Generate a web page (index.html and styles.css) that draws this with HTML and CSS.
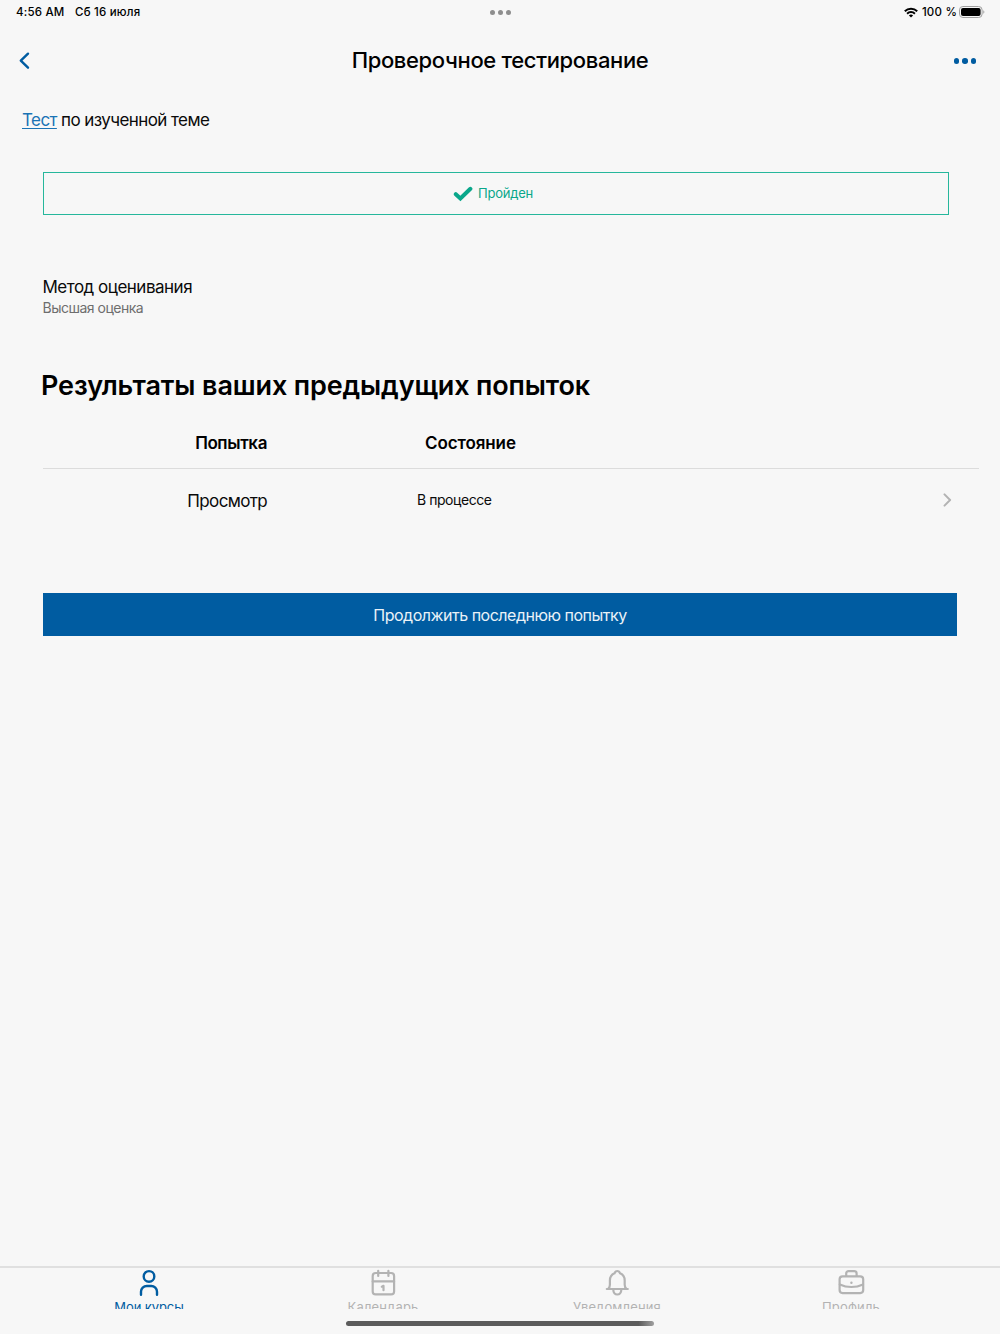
FILE: index.html
```html
<!DOCTYPE html>
<html lang="ru">

<head>
  <meta charset="UTF-8" />
  <meta name="viewport" content="width=device-width, initial-scale=1.0" />
  <title>Проверочное тестирование</title>
  <link rel="stylesheet" href="styles.css">
</head>

<body>
  <div class="status-bar">
    <div class="status-left">
      <span class="time">4:56 AM</span>
      <span class="date">Сб 16 июля</span>
    </div>
    <div class="multitask"><i></i><i></i><i></i></div>
    <div class="status-right">
      <svg width="14" height="11" viewBox="0 0 14 11" fill="none" stroke="#000" stroke-width="2">
        <path d="M0.8 4.2a8.9 8.9 0 0 1 12.4 0" />
        <path d="M3.1 6.7a5.6 5.6 0 0 1 7.8 0" />
        <path d="M7 10.6 4.9 8.5a3 3 0 0 1 4.2 0z" fill="#000" stroke="none" />
      </svg>
      <span class="percent">100 %</span>
      <svg width="26" height="12" viewBox="0 0 26 12">
        <rect x="0.5" y="0.5" width="22.6" height="11" rx="3.4" fill="none" stroke="#a0a0a0" />
        <rect x="2" y="2" width="19.6" height="8" rx="2" />
        <path d="M24.3 4.2v3.6q1.1-.5 1.1-1.8t-1.1-1.8z" fill="#a0a0a0" />
      </svg>
    </div>
  </div>

  <header class="header">
    <svg class="back" width="12" height="18" viewBox="0 0 12 18" fill="none" stroke="#005ca1" stroke-width="2.4" stroke-linecap="round" stroke-linejoin="round">
      <path d="M10 1.700 2.800 8.700l7.200 7" />
    </svg>
    <h1 class="title">Проверочное тестирование</h1>
    <div class="more"><i></i><i></i><i></i></div>
  </header>

  <main class="content">
    <p class="intro"><a href="#">Тест</a> по изученной теме</p>

    <div class="passed">
      <svg width="20" height="16" viewBox="0 0 20 16" fill="none" stroke="#0aa78b" stroke-width="4" stroke-linecap="round">
        <path d="M2.800 8.200 7.400 12.400 17.400 2.800" />
      </svg>
      <span class="passed-text">Пройден</span>
    </div>

    <section class="method">
      <div class="method-name">Метод оценивания</div>
      <div class="method-value">Высшая оценка</div>
    </section>

    <h2 class="results-title">Результаты ваших предыдущих попыток</h2>

    <div class="attempts">
      <div class="row row-head">
        <span class="col-attempt">Попытка</span>
        <span class="col-state">Состояние</span>
      </div>
      <div class="row">
        <span class="col-attempt">Просмотр</span>
        <span class="col-state">В процессе</span>
        <svg class="chevron" width="10" height="14" viewBox="0 0 10 14" fill="none" stroke="#b3b3b3" stroke-width="2" stroke-linecap="round" stroke-linejoin="round">
          <path d="M1.500 1.400 7.100 7 1.500 12.600" />
        </svg>
      </div>
    </div>

    <button class="continue"><span>Продолжить последнюю попытку</span></button>
  </main>

  <nav class="tabs">
    <a class="tab tab-courses active">
      <svg width="28" height="28" viewBox="0 0 28 28" fill="none" stroke="currentColor" stroke-width="2.4" stroke-linecap="round">
        <circle cx="14" cy="7.4" r="5.3" />
        <path d="M6 25.800v-3a5.800 5.800 0 0 1 5.800-5.800h4.400a5.800 5.800 0 0 1 5.800 5.800v3" />
      </svg>
      <span>Мои курсы</span>
    </a>
    <a class="tab tab-calendar">
      <svg width="28" height="28" viewBox="0 0 28 28" fill="none" stroke="currentColor" stroke-width="2.200" stroke-linecap="round" stroke-linejoin="round">
        <rect x="3.700" y="4" width="21.400" height="21.400" rx="3" />
        <path d="M3.700 12.400h21.400M9.200 1.800v5.200M19.400 1.800v5.200" />
        <path d="M12.800 17.700 14.500 16.800v4.400" />
      </svg>
      <span>Календарь</span>
    </a>
    <a class="tab tab-alerts">
      <svg width="28" height="28" viewBox="0 0 28 28" fill="none" stroke="currentColor" stroke-width="2.200" stroke-linecap="round" stroke-linejoin="round">
        <path d="M3.800 20h21M5.200 19.800c1.300-1 1.700-2 1.700-4V11.500c0-3.500 1.800-6 4.600-7.200.5-1.500 1.400-2.300 2.800-2.300s2.300.8 2.800 2.300c2.800 1.200 4.600 3.700 4.600 7.200v4.300c0 2 .4 3 1.700 4" />
        <path d="M10.300 20.800c0 2.800 1.700 4.700 4 4.700s4-1.900 4-4.700" />
      </svg>
      <span>Уведомления</span>
    </a>
    <a class="tab tab-profile">
      <svg width="28" height="28" viewBox="0 0 28 28" fill="none" stroke="currentColor" stroke-width="2.200" stroke-linecap="round" stroke-linejoin="round">
        <rect x="2.600" y="7.300" width="23.600" height="16.800" rx="3" />
        <path d="M9.200 7V4.500a2.300 2.300 0 0 1 2.300-2.300h5.800a2.300 2.300 0 0 1 2.300 2.300V7" />
        <path d="M2.800 15.500c7 3.200 16.200 3.200 23.200 0" />
        <circle cx="14.400" cy="13.800" r="1.200" fill="currentColor" stroke="none" />
      </svg>
      <span>Профиль</span>
    </a>
  </nav>
  <div class="home-area">
    <div class="home-indicator"></div>
  </div>
</body>

</html>
```
FILE: styles.css
```css
* {
  box-sizing: border-box;
}

body {
  margin: 0;
  height: 1334px;
  display: flex;
  flex-direction: column;
  background: #f7f7f7;
  color: #0a0a0a;
  font-family: Inter, sans-serif;
  overflow: hidden;
}

svg {
  display: block;
  flex: none;
}

h1,
h2,
p {
  margin: 0;
}

.status-bar {
  height: 24px;
  display: grid;
  grid-template-columns: 1fr auto 1fr;
  align-items: center;
  padding: 0 15px 0 16px;
  font-size: 11.5px;
  font-weight: 500;
  letter-spacing: 0.2px;
  color: #000;
  white-space: nowrap;
}

.status-left {
  display: flex;
  gap: 10.5px;
}

.status-right {
  display: flex;
  justify-content: flex-end;
  align-items: center;
}

.percent {
  margin: 0 2px 0 4px;
}

.multitask {
  display: flex;
  gap: 3px;
}

.multitask i {
  width: 5px;
  height: 5px;
  border-radius: 50%;
  background: #8e8e8e;
}

.header {
  height: 74px;
  display: grid;
  grid-template-columns: 64px 1fr 59px;
  align-items: center;
  padding: 0 23px 0 18px;
}

.title {
  padding-bottom: 3px;
  font-size: 22px;
  font-weight: 500;
  letter-spacing: -0.35px;
  text-align: center;
  color: #000;
}

.more {
  display: flex;
  justify-content: flex-end;
  gap: 3px;
  padding-right: 1px;
}

.more i {
  width: 5.5px;
  height: 5.5px;
  border-radius: 50%;
  background: #005ca1;
}

.content {
  flex: 1;
  padding: 10px 21px 0 22px;
}

.intro {
  font-size: 17px;
  line-height: 24px;
  letter-spacing: -0.58px;
}

.intro a {
  color: #1a73b5;
  text-decoration: underline;
  text-decoration-thickness: 1px;
  text-underline-offset: 2px;
}

.passed {
  display: flex;
  align-items: center;
  justify-content: center;
  height: 43px;
  margin: 40px 30px 0 21px;
  padding-right: 6px;
  border: 1px solid #26b79c;
  color: #0aa78b;
  font-size: 13px;
  letter-spacing: -0.2px;
}

.passed svg {
  margin-right: 5px;
}

.passed-text {
  padding-bottom: 1px;
}

.method {
  margin: 60px 0 0 20.5px;
}

.method-name {
  font-size: 17px;
  line-height: 24px;
  letter-spacing: -0.5px;
}

.method-value {
  font-size: 14px;
  line-height: 18px;
  letter-spacing: -0.5px;
  color: #6e6e6e;
}

.results-title {
  margin: 51px 0 0 19px;
  font-size: 27px;
  line-height: 36px;
  font-weight: 600;
  letter-spacing: -0.13px;
  color: #000;
  white-space: nowrap;
}

.attempts {
  margin: 14px 0 0 21px;
}

.row {
  display: flex;
  align-items: center;
  height: 62px;
  padding-right: 26px;
}

.row-head {
  height: 51px;
  border-bottom: 1px solid #dcdcdc;
  font-weight: 600;
  color: #000;
}

.col-attempt {
  width: 224px;
  padding-top: 1px;
  text-align: right;
  font-size: 17px;
  letter-spacing: -0.65px;
}

.col-state {
  flex: 1;
  padding-left: 150px;
  padding-bottom: 1px;
  font-size: 14px;
  letter-spacing: -0.45px;
}

.row-head .col-attempt {
  padding-top: 0;
  letter-spacing: -0.4px;
}

.row-head .col-state {
  padding-left: 158px;
  padding-bottom: 0;
  font-size: 17px;
  letter-spacing: -0.1px;
}

.continue {
  display: block;
  width: 914px;
  height: 43px;
  margin: 62px 0 0 21px;
  padding: 0;
  border: none;
  background: #005ca1;
  color: #e9f2f8;
  font-family: inherit;
  font-size: 16px;
  letter-spacing: -0.48px;
}

.tabs {
  height: 43px;
  display: flex;
  padding: 0 32px;
  border-top: 2px solid #e0e0e0;
  overflow: hidden;
}

.tab {
  flex: 1;
  display: flex;
  flex-direction: column;
  align-items: center;
  padding-top: 1px;
  color: #b3b3b3;
  font-size: 13px;
  line-height: 18px;
  letter-spacing: 0.15px;
}

.tab span {
  margin-top: 1px;
}

.tab.active {
  color: #005ca1;
  letter-spacing: -0.1px;
}

.home-area {
  height: 25px;
  display: flex;
  justify-content: center;
  padding-top: 12px;
}

.home-indicator {
  width: 308px;
  height: 5px;
  border-radius: 3px;
  background: linear-gradient(90deg, #5c5c5c 95%, #a0a0a0);
}
```
